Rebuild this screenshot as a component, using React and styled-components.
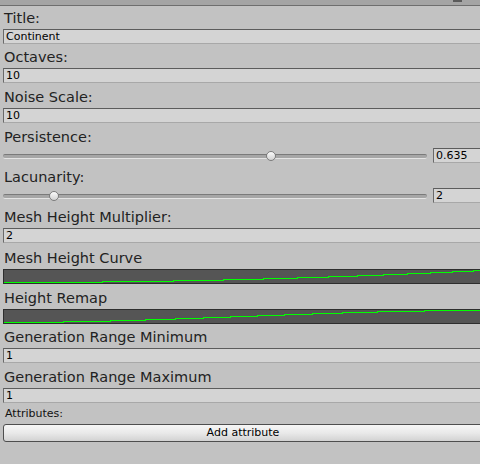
import React from 'react'
import styled, { createGlobalStyle } from 'styled-components'

const GlobalStyle = createGlobalStyle`
	html, body {
		margin: 0;
		padding: 0;
		background: #c2c2c2;
	}
`

const Page = styled('div')`
	width: 480px;
	height: 464px;
	overflow: hidden;
	background: #c2c2c2;
	font-family: "DejaVu Sans", Verdana, sans-serif;
	color: #222;
`

const TopStrip = styled('div')`
	height: 5px;
	background: #a4a4a4;
	border-bottom: 1px solid #6e6e6e;
	display: flex;
	justify-content: flex-end;
	padding-right: 18px;
`

const StripMark = styled('div')`
	width: 9px;
	height: 2px;
	background: #5a5a5a;
`

const Form = styled('div')`
	display: flex;
	flex-direction: column;
	padding-left: 3px;
`

// text sits with its baseline 6px above the next control
const Label = styled('div')`
	box-sizing: border-box;
	height: ${p => p.$h || 25}px;
	padding-top: ${p => (p.$h || 25) - 22}px;
	padding-left: 1px;
	font-size: 14.5px;
	line-height: 22px;
	white-space: nowrap;
`

const SmallLabel = styled('div')`
	height: 21px;
	padding-left: 2px;
	font-size: 11px;
	line-height: 21px;
	color: #111;
`

const Field = styled('div')`
	box-sizing: border-box;
	height: 15px;
	width: ${p => (p.$width ? `${p.$width}px` : 'auto')};
	flex-shrink: 0;
	background: #d4d4d4;
	border-top: 1px solid #5c5c5c;
	border-left: 1px solid #6a6a6a;
	border-bottom: 1px solid #a8a8a8;
	padding-left: 2px;
	font-size: 11px;
	line-height: 13px;
	color: #000;
	white-space: nowrap;
`

const SliderRow = styled('div')`
	display: flex;
	align-items: center;
	gap: 6px;
	height: 15px;
`

const Slider = styled('div')`
	position: relative;
	flex: 1;
	height: 15px;
	display: flex;
	align-items: center;
`

const Track = styled('div')`
	box-sizing: border-box;
	width: 100%;
	height: 5px;
	border-radius: 2px;
	background: #a6a6a6;
	border-top: 1px solid #7a7a7a;
	border-bottom: 1px solid #e4e4e4;
	margin-top: 1px;
`

const Thumb = styled('div')`
	position: absolute;
	top: 3px;
	width: 10px;
	height: 10px;
	box-sizing: border-box;
	margin-left: -5px;
	border-radius: 50%;
	border: 1px solid #7c7c7c;
	background: linear-gradient(#fbfbfb, #d2d2d2);
`

const CurveBox = styled('div')`
	box-sizing: border-box;
	height: 15px;
	background: #555555;
	border-top: 1px solid #2e2e2e;
	border-left: 1px solid #2e2e2e;
	border-bottom: 1px solid #2e2e2e;
	overflow: hidden;

	svg {
		display: block;
	}
`

const Button = styled('div')`
	box-sizing: border-box;
	height: 18px;
	margin-right: -3px;
	border: 1px solid #4e4e4e;
	border-radius: 3px;
	background: linear-gradient(#f6f6f6 0%, #e9e9e9 50%, #d2d2d2 100%);
	font-size: 11px;
	line-height: 16px;
	text-align: center;
	color: #000;
`

// step segments: [startX, endX, row] in page pixels, row inside the curve box
const meshSteps = [
	[3, 102, 12], [102, 173, 11], [173, 223, 10], [223, 263, 9], [263, 297, 8],
	[297, 328, 7], [328, 357, 6], [357, 383, 5], [383, 407, 4], [407, 430, 3],
	[430, 452, 2], [452, 473, 1], [473, 480, 0]
]

const remapSteps = [
	[3, 63, 12], [63, 110, 11], [110, 145, 10], [145, 175, 9], [175, 203, 8],
	[203, 230, 7], [230, 257, 6], [257, 284, 5], [284, 312, 4], [312, 342, 3],
	[342, 377, 2], [377, 424, 1], [424, 480, 0]
]

const Curve = ({ steps }) => (
	<CurveBox>
		<svg width="477" height="13" viewBox="0 0 477 13" shapeRendering="crispEdges">
			{steps.map(([a, b, row]) => (
				<rect key={a} x={a - 4} y={row} width={b - a + 1} height="1" fill="#00ff00" />
			))}
		</svg>
	</CurveBox>
)

const SliderField = ({ value, min, max, text }) => {
	const pct = (value - min) / (max - min)
	return (
		<SliderRow>
			<Slider>
				<Track />
				<Thumb style={{ left: `calc(5px + (100% - 10px) * ${pct})` }} />
			</Slider>
			<Field $width={47}>{text}</Field>
		</SliderRow>
	)
}

export default function App() {
	return (
		<Page>
			<GlobalStyle />
			<TopStrip>
				<StripMark />
			</TopStrip>
			<Form>
				<Label $h={23}>Title:</Label>
				<Field>Continent</Field>

				<Label $h={24}>Octaves:</Label>
				<Field>10</Field>

				<Label>Noise Scale:</Label>
				<Field>10</Field>

				<Label>Persistence:</Label>
				<SliderField value={0.635} min={0} max={1} text="0.635" />

				<Label>Lacunarity:</Label>
				<SliderField value={2} min={1} max={10} text="2" />

				<Label>Mesh Height Multiplier:</Label>
				<Field>2</Field>

				<Label $h={26}>Mesh Height Curve</Label>
				<Curve steps={meshSteps} />

				<Label>Height Remap</Label>
				<Curve steps={remapSteps} />

				<Label $h={24}>Generation Range Minimum</Label>
				<Field>1</Field>

				<Label>Generation Range Maximum</Label>
				<Field>1</Field>

				<SmallLabel>Attributes:</SmallLabel>
				<Button>Add attribute</Button>
			</Form>
		</Page>
	)
}
